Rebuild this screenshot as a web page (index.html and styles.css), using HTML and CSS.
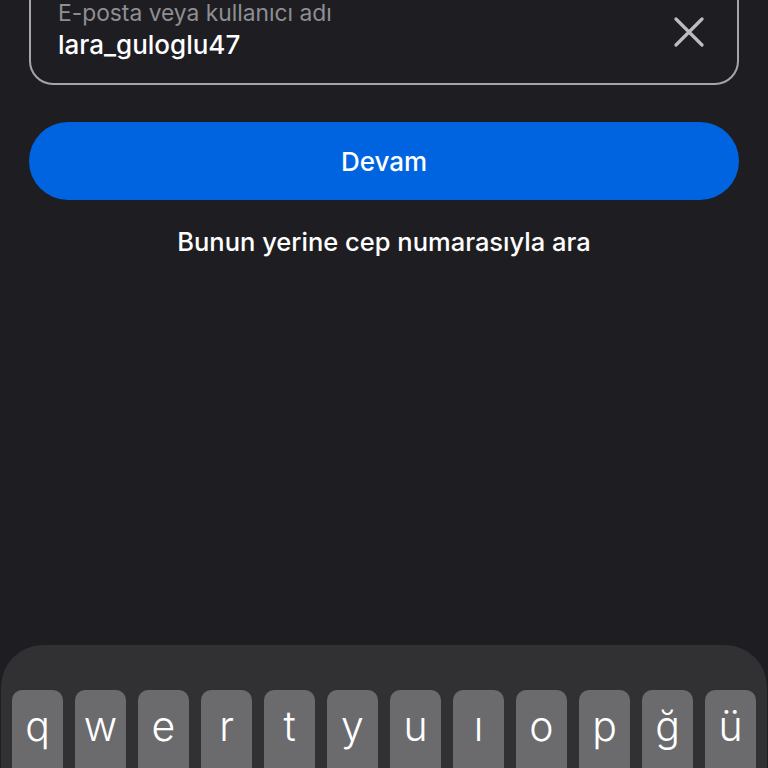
FILE: index.html
```html
<!DOCTYPE html>
<html lang="tr">
<head>
<meta charset="utf-8">
<link rel="stylesheet" href="styles.css">
</head>
<body>
<div class="screen">
  <div class="content">
    <div class="field">
      <div class="field-text">
        <div class="label">E-posta veya kullanıcı adı</div>
        <div class="value">lara_guloglu47</div>
      </div>
      <svg class="clear" width="30" height="30" viewBox="0 0 30 30" aria-hidden="true">
        <path d="M2 2 L28 28 M28 2 L2 28" stroke="#bdbdc0" stroke-width="3.2" stroke-linecap="round" fill="none"/>
      </svg>
    </div>
    <button class="primary">Devam</button>
    <div class="alt">Bunun yerine cep numarasıyla ara</div>
  </div>
  <div class="keyboard">
    <div class="key">q</div>
    <div class="key">w</div>
    <div class="key">e</div>
    <div class="key">r</div>
    <div class="key">t</div>
    <div class="key">y</div>
    <div class="key">u</div>
    <div class="key">ı</div>
    <div class="key">o</div>
    <div class="key">p</div>
    <div class="key">ğ</div>
    <div class="key">ü</div>
  </div>
</div>
</body>
</html>
```

FILE: styles.css
```css
* { box-sizing: border-box; }
html, body { margin: 0; padding: 0; }
body {
  background: #1e1e22;
  font-family: Inter, "Noto Sans", "Liberation Sans", sans-serif;
  color: #fff;
}
.screen {
  width: 768px;
  height: 768px;
  overflow: hidden;
  display: flex;
  flex-direction: column;
}
.content {
  padding: 0 29px 0 29px;
  display: flex;
  flex-direction: column;
}
.field {
  margin-top: -30px;
  height: 115px;
  border: 2px solid #a5a5aa;
  border-radius: 24px;
  display: flex;
  align-items: flex-end;
  justify-content: space-between;
  padding: 0 33px 37px 27px;
}
.field-text {
  display: flex;
  flex-direction: column;
}
.label {
  font-size: 22.8px;
  line-height: 26px;
  color: #8e8e93;
  margin-bottom: 4px;
}
.value {
  font-size: 26px;
  line-height: 30px;
  color: #fff;
  font-weight: 500;
  margin-bottom: -14px;
}
.clear {
  width: 30px;
  height: 30px;
  margin-bottom: -1px;
}
.primary {
  margin-top: 37px;
  height: 78px;
  border: none;
  border-radius: 39px;
  background: #0064e0;
  color: #fff;
  font-family: inherit;
  font-size: 26px;
  font-weight: 500;
}
.alt {
  margin-top: 27px;
  text-align: center;
  font-size: 25.5px;
  font-weight: 500;
  line-height: 30px;
}
.keyboard {
  margin-top: auto;
  height: 123px;
  background: #313134;
  border-radius: 42px 42px 0 0;
  margin-left: 1px;
  margin-right: 1px;
  display: flex;
  gap: 12px;
  padding: 45px 11px 0 11px;
}
.key {
  flex: 0 0 51px;
  height: 90px;
  background: #6b6b6e;
  border-radius: 10px;
  display: flex;
  justify-content: center;
  padding-top: 12px;
  font-size: 41px;
  line-height: 48px;
  font-weight: 300;
  color: #fff;
}
```
